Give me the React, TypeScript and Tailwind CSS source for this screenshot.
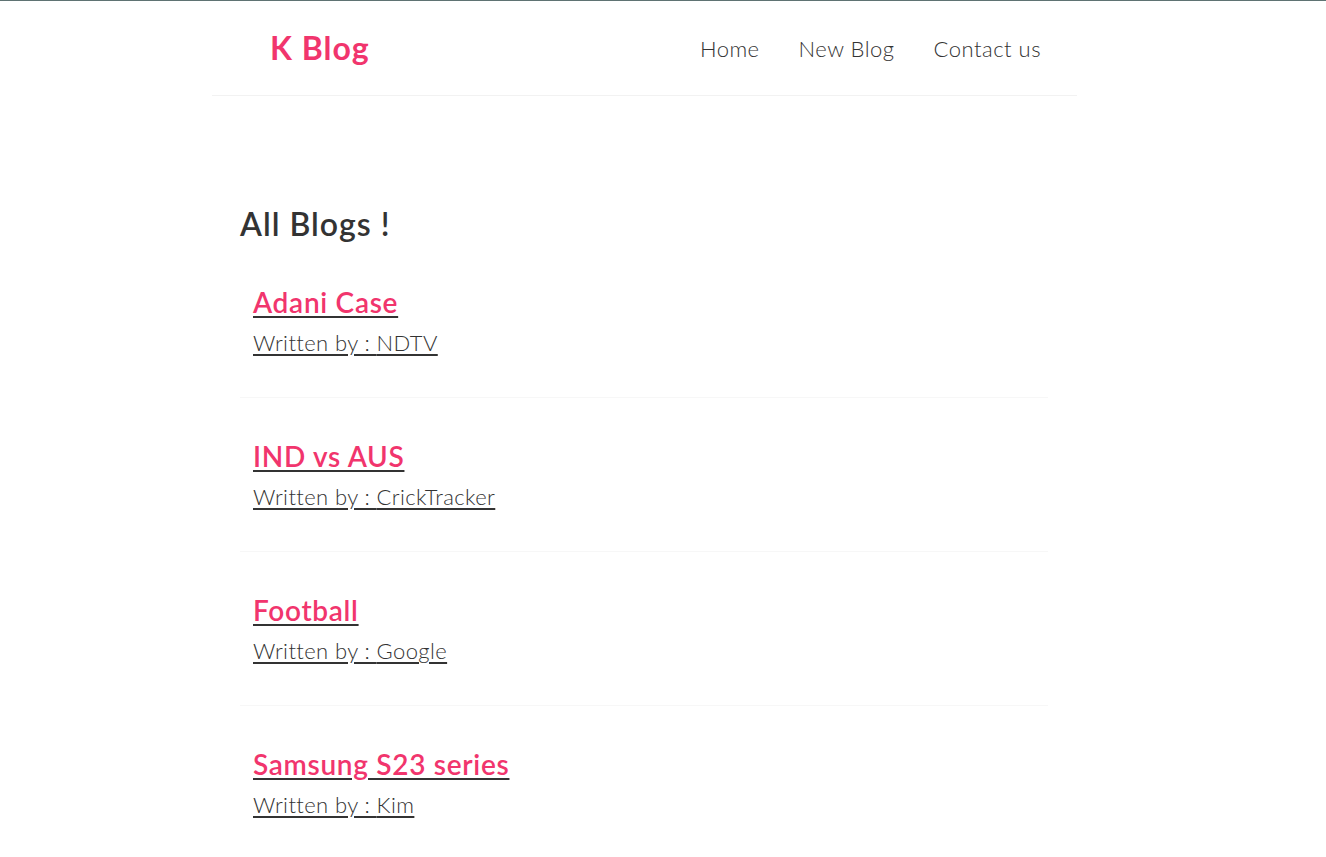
import React from 'react';

const blogs = [
  { title: 'Adani Case', author: 'NDTV' },
  { title: 'IND vs AUS', author: 'CrickTracker' },
  { title: 'Football', author: 'Google' },
  { title: 'Samsung S23 series', author: 'Kim' },
];

export default function App() {
  return (
    <div className="min-h-screen bg-white border-t border-[#5f7373] text-[#333]" style={{ fontFamily: 'Lato, "Open Sans", sans-serif' }}>
      {/* Navbar */}
      <nav className="ml-[212px] w-[865px] h-[95px] flex items-center justify-between pl-[58px] pr-[36px] border-b border-[#f2f2f2]">
        <h1 className="text-[32px] leading-[40px] font-bold tracking-[1px] text-[#f1356d]">K Blog</h1>
        <div className="flex items-center gap-[39px] text-[22px] font-light tracking-[0.5px]">
          <a href="#">Home</a>
          <a href="#">New Blog</a>
          <a href="#">Contact us</a>
        </div>
      </nav>

      {/* Content */}
      <div className="ml-[240px] w-[808px] pt-[108px]">
        <h2 className="text-[32px] leading-[40px] font-semibold tracking-[1px]">All Blogs !</h2>
        {blogs.map((b, i) => (
          <div key={i} className="px-[13px] pt-[40px] pb-[40px] border-b border-[#f7f7f7]">
            <a href="#" className="underline decoration-[#333] underline-offset-[3px]">
              <div className="text-[28px] leading-[36px] font-semibold tracking-[0.7px] text-[#f1356d]">{b.title}</div>
              <div className="mt-[9px] text-[22px] leading-[28px] font-light tracking-[0.4px] text-[#333]">Written by : {b.author}</div>
            </a>
          </div>
        ))}
      </div>
    </div>
  );
}
